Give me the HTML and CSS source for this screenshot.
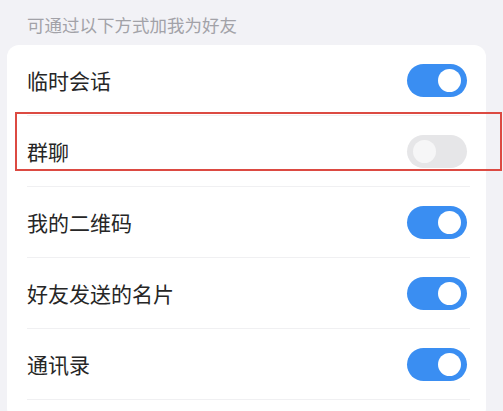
FILE: index.html
```html
<!DOCTYPE html>
<html lang="zh-CN">
<head>
    <meta charset="UTF-8">
    <meta name="viewport" content="width=device-width, initial-scale=1.0">
    <title>加好友方式</title>
    <link rel="stylesheet" href="styles.css">
</head>
<body>
    <div class="section-title">可通过以下方式加我为好友</div>
    <div class="card">
        <div class="row">
            <span class="label">临时会话</span>
            <span class="switch on"></span>
        </div>
        <div class="row">
            <span class="label">群聊</span>
            <span class="switch"></span>
            <div class="highlight"></div>
        </div>
        <div class="row">
            <span class="label">我的二维码</span>
            <span class="switch on"></span>
        </div>
        <div class="row">
            <span class="label">好友发送的名片</span>
            <span class="switch on"></span>
        </div>
        <div class="row">
            <span class="label">通讯录</span>
            <span class="switch on"></span>
        </div>
        <div class="row empty"></div>
    </div>
</body>
</html>
```

FILE: styles.css
```css
body {
    margin: 0;
    padding: 0 0 0 7px;
    background-color: #f2f2f6;
    font-family: "Noto Sans CJK SC", "Noto Sans", sans-serif;
    overflow: hidden;
    height: 411px;
}
.section-title {
    padding: 14px 0 0 20px;
    height: 31px;
    line-height: 22px;
    font-size: 17.5px;
    color: #a2a2a8;
}
.card {
    width: 479px;
    background: #fff;
    border-radius: 12px;
}
.row {
    position: relative;
    display: flex;
    align-items: center;
    justify-content: space-between;
    height: 70px;
    margin: 0 16px 0 20px;
    border-top: 1px solid #f0f0f2;
}
.row:first-child {
    border-top: none;
}
.row.empty {
    height: 20px;
}
.label {
    font-size: 21px;
    color: #262626;
}
.switch {
    position: relative;
    width: 60px;
    height: 33px;
    margin-right: 3px;
    border-radius: 17px;
    background: #e6e6e8;
}
.switch::after {
    content: "";
    position: absolute;
    top: 5px;
    left: 6px;
    width: 23px;
    height: 23px;
    border-radius: 50%;
    background: #f6f6f7;
}
.switch.on {
    background: #3a8ef2;
}
.switch.on::after {
    left: auto;
    right: 6px;
    background: #fff;
}
.highlight {
    position: absolute;
    top: -4px;
    left: -12px;
    width: 483px;
    height: 55px;
    border: 2px solid #dc4a42;
    pointer-events: none;
}
```
